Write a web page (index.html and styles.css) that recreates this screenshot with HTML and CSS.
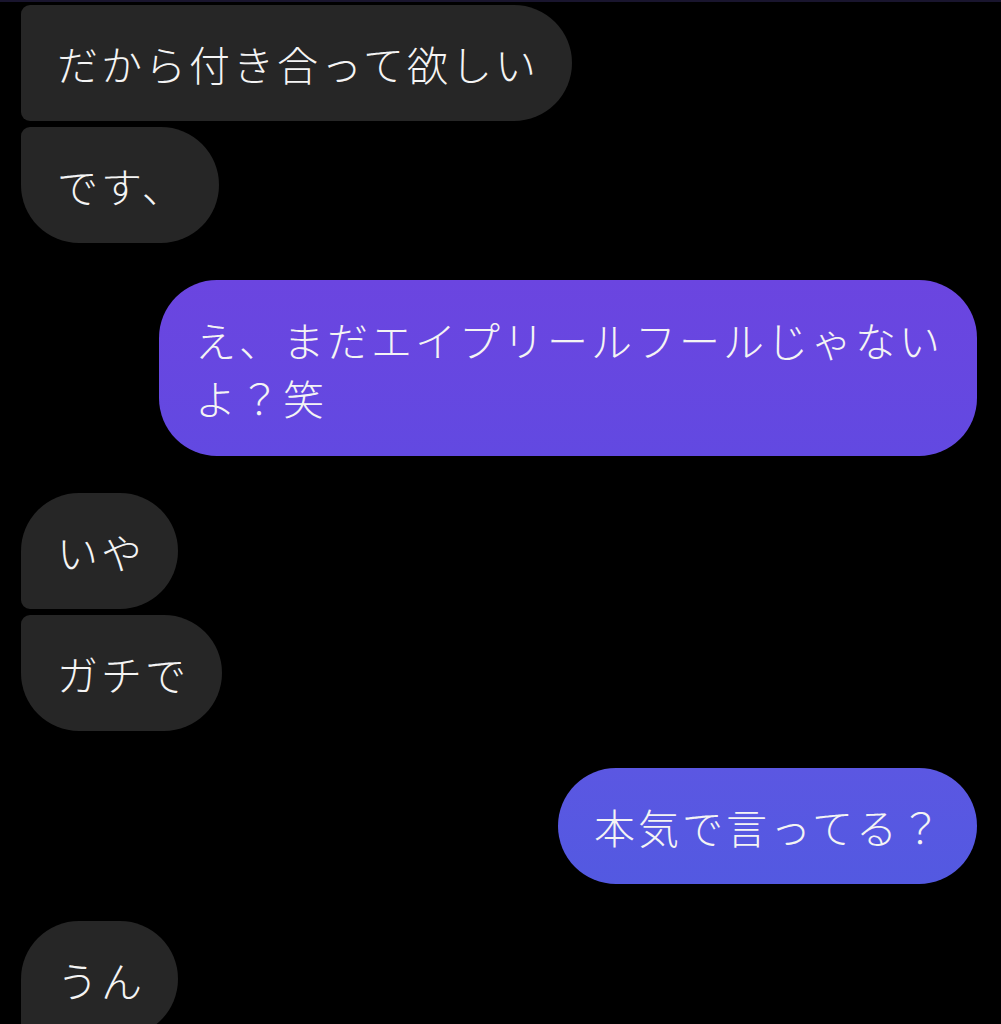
FILE: index.html
```html
<!DOCTYPE html>
<html lang="ja">
<head>
<meta charset="utf-8">
<title>Chat</title>
<link rel="stylesheet" href="styles.css">
</head>
<body>
<div class="topline"></div>
<div class="chat">
  <div class="group">
    <div class="bubble in mid">だから付き合って欲しい</div>
    <div class="bubble in last">です、</div>
  </div>
  <div class="group">
    <div class="bubble out solo violet multi">え、まだエイプリールフールじゃないよ？笑</div>
  </div>
  <div class="group">
    <div class="bubble in first">いや</div>
    <div class="bubble in last">ガチで</div>
  </div>
  <div class="group">
    <div class="bubble out solo blue">本気で言ってる？</div>
  </div>
  <div class="group">
    <div class="bubble in first">うん</div>
  </div>
</div>
</body>
</html>
```
FILE: styles.css
```css
html, body {
  margin: 0;
  padding: 0;
  background: #000;
}
body {
  width: 1001px;
  height: 1024px;
  overflow: hidden;
  font-family: "Noto Sans CJK JP", "Noto Sans", sans-serif;
}
.topline {
  height: 2px;
  background: #19152e;
}
.chat {
  display: flex;
  flex-direction: column;
  gap: 37px;
  padding: 3px 24px 0 21px;
}
.group {
  display: flex;
  flex-direction: column;
  gap: 6px;
}
.bubble {
  box-sizing: border-box;
  max-width: 818px;
  padding: 29px 33px 29px 36px;
  font-size: 41px;
  letter-spacing: 3px;
  line-height: 58px;
  color: #f4f4f4;
  font-weight: 300;
}
.multi {
  padding-top: 30px;
  padding-bottom: 30px;
}
.in {
  align-self: flex-start;
  background: #262626;
}
.out {
  align-self: flex-end;
}
.mid {
  border-radius: 9px 58px 58px 9px;
}
.first {
  border-radius: 58px 58px 58px 9px;
}
.last {
  border-radius: 9px 58px 58px 58px;
}
.solo {
  border-radius: 58px;
}
.violet {
  background: linear-gradient(180deg, #6b45e0 0%, #6249e1 100%);
}
.blue {
  background: linear-gradient(180deg, #5b57e2 0%, #5359e1 100%);
}
```
